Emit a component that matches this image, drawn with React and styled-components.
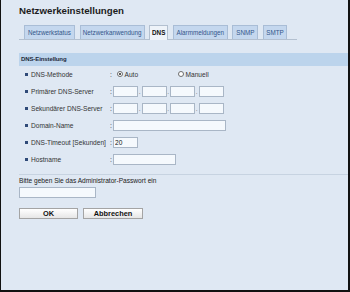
import React from "react";
import styled, { createGlobalStyle } from "styled-components";

const GlobalStyle = createGlobalStyle`
  html, body { margin: 0; padding: 0; background: #dfe8f3; }
  body { font-family: "Liberation Sans", Arial, sans-serif; }
`;

const Frame = styled.div`
  width: 350px;
  height: 292px;
  box-sizing: border-box;
  background: #dfe8f3;
  border-left: 1px solid #111;
  border-right: 2px solid #111;
  border-bottom: 2px solid #111;
  padding-left: 18px;
  display: flex;
  flex-direction: column;
  overflow: hidden;
`;

const Title = styled.h1`
  margin: 5px 0 0;
  font-size: 9.7px;
  line-height: 11px;
  font-weight: bold;
  color: #1c1c1c;
`;

const TabBar = styled.div`
  margin-top: 9px;
  width: 273px;
  height: 14px;
  padding-left: 5px;
  box-sizing: content-box;
  display: flex;
  align-items: flex-end;
  gap: 4.6px;
  border-bottom: 1px solid #b3c0d0;
`;

const Tab = styled.div`
  width: ${p => p.$w}px;
  height: ${p => (p.$active ? "15px" : "14px")};
  margin-bottom: ${p => (p.$active ? "-1px" : "0")};
  box-sizing: border-box;
  border: 1px solid ${p => (p.$active ? "#b3c0d0" : "#a9bdd6")};
  border-bottom: none;
  background: ${p => (p.$active ? "#eef3f9" : "#c4d7ee")};
  color: ${p => (p.$active ? "#111" : "#33568a")};
  font-size: 6.3px;
  line-height: 13px;
  text-align: center;
  font-weight: ${p => (p.$active ? "bold" : "normal")};
  white-space: nowrap;
  overflow: hidden;
`;

const SectionHead = styled.div`
  margin-top: 13px;
  height: 13px;
  background: #bcd4ec;
  padding-left: 2px;
  font-size: 6px;
  line-height: 13px;
  font-weight: bold;
  letter-spacing: -0.1px;
  color: #1c2a3c;
`;

const Rows = styled.div`
  margin-top: 2px;
  display: flex;
  flex-direction: column;
  gap: 5px;
`;

const Row = styled.div`
  display: grid;
  grid-template-columns: 90px 4px 1fr;
  height: 12px;
  align-items: center;
  font-size: 6.6px;
  color: #333;
`;

const Label = styled.div`
  display: flex;
  align-items: center;
  gap: 3px;
  padding-left: 6px;
  white-space: nowrap;
  &::before {
    content: "";
    width: 3px;
    height: 3px;
    background: #2f4a78;
  }
`;

const Colon = styled.span`
  padding-left: 1px;
  font-size: 7px;
`;

const Field = styled.div`
  display: flex;
  align-items: center;
`;

const Input = styled.input`
  box-sizing: border-box;
  width: ${p => p.$w}px;
  height: 11px;
  margin: 0;
  padding: 0 1px;
  border: 1px solid #a9b6c6;
  background: #f5f9fd;
  font-family: "Liberation Sans", Arial, sans-serif;
  font-size: 6.6px;
  color: #111;
  outline: none;
`;

const Dot = styled.span`
  width: 3.5px;
  text-align: center;
  font-size: 6.6px;
  color: #777;
`;

const Option = styled.label`
  display: flex;
  align-items: center;
  gap: 1.5px;
  width: ${p => (p.$w ? `${p.$w}px` : "auto")};
  padding-left: ${p => p.$pl}px;
  box-sizing: border-box;
`;

const Radio = styled.span`
  width: 6px;
  height: 6px;
  box-sizing: border-box;
  border-radius: 50%;
  border: 1px solid #6d6d6d;
  background: #fff;
  display: flex;
  align-items: center;
  justify-content: center;
  &::after {
    content: "";
    width: 2px;
    height: 2px;
    border-radius: 50%;
    background: ${p => (p.$checked ? "#222" : "transparent")};
  }
`;

const Divider = styled.div`
  margin-top: 9px;
  height: 1px;
  background: #c7d3e1;
`;

const Prompt = styled.div`
  margin-top: 2px;
  font-size: 6.6px;
  line-height: 8px;
  color: #222;
`;

const Password = styled(Input)`
  margin-top: 2px;
`;

const Buttons = styled.div`
  margin-top: 10px;
  display: flex;
  gap: 5px;
`;

const Button = styled.button`
  width: ${p => p.$w}px;
  height: 11px;
  margin: 0;
  padding: 0;
  box-sizing: border-box;
  border: 1px solid #a4a4a4;
  background: linear-gradient(#ffffff, #e6e6e6);
  font-family: "Liberation Sans", Arial, sans-serif;
  font-size: 7.4px;
  line-height: 9px;
  font-weight: bold;
  color: #111;
`;

const tabs = [
  { name: "Netzwerkstatus", w: 51 },
  { name: "Netzwerkanwendung", w: 65 },
  { name: "DNS", w: 19 },
  { name: "Alarmmeldungen", w: 55 },
  { name: "SNMP", w: 26 },
  { name: "SMTP", w: 24 },
];

const IpField = () => (
  <Field>
    <Input $w={25} readOnly />
    <Dot>.</Dot>
    <Input $w={25} readOnly />
    <Dot>.</Dot>
    <Input $w={25} readOnly />
    <Dot>.</Dot>
    <Input $w={25} readOnly />
  </Field>
);

export default function App() {
  return (
    <>
      <GlobalStyle />
      <Frame>
        <Title>Netzwerkeinstellungen</Title>
        <TabBar>
          {tabs.map(t => (
            <Tab key={t.name} $w={t.w} $active={t.name === "DNS"}>{t.name}</Tab>
          ))}
        </TabBar>
        <SectionHead>DNS-Einstellung</SectionHead>
        <Rows>
          <Row>
            <Label>DNS-Methode</Label>
            <Colon>:</Colon>
            <Field>
              <Option $w={62} $pl={4}><Radio $checked />Auto</Option>
              <Option $pl={3}><Radio />Manuell</Option>
            </Field>
          </Row>
          <Row>
            <Label>Primärer DNS-Server</Label>
            <Colon>:</Colon>
            <IpField />
          </Row>
          <Row>
            <Label>Sekundärer DNS-Server</Label>
            <Colon>:</Colon>
            <IpField />
          </Row>
          <Row>
            <Label>Domain-Name</Label>
            <Colon>:</Colon>
            <Field><Input $w={113} readOnly /></Field>
          </Row>
          <Row>
            <Label>DNS-Timeout [Sekunden]</Label>
            <Colon>:</Colon>
            <Field><Input $w={25} defaultValue="20" readOnly /></Field>
          </Row>
          <Row>
            <Label>Hostname</Label>
            <Colon>:</Colon>
            <Field><Input $w={63} readOnly /></Field>
          </Row>
        </Rows>
        <Divider />
        <Prompt>Bitte geben Sie das Administrator-Passwort ein</Prompt>
        <Password $w={77} type="password" readOnly />
        <Buttons>
          <Button $w={59}>OK</Button>
          <Button $w={60}>Abbrechen</Button>
        </Buttons>
      </Frame>
    </>
  );
}
